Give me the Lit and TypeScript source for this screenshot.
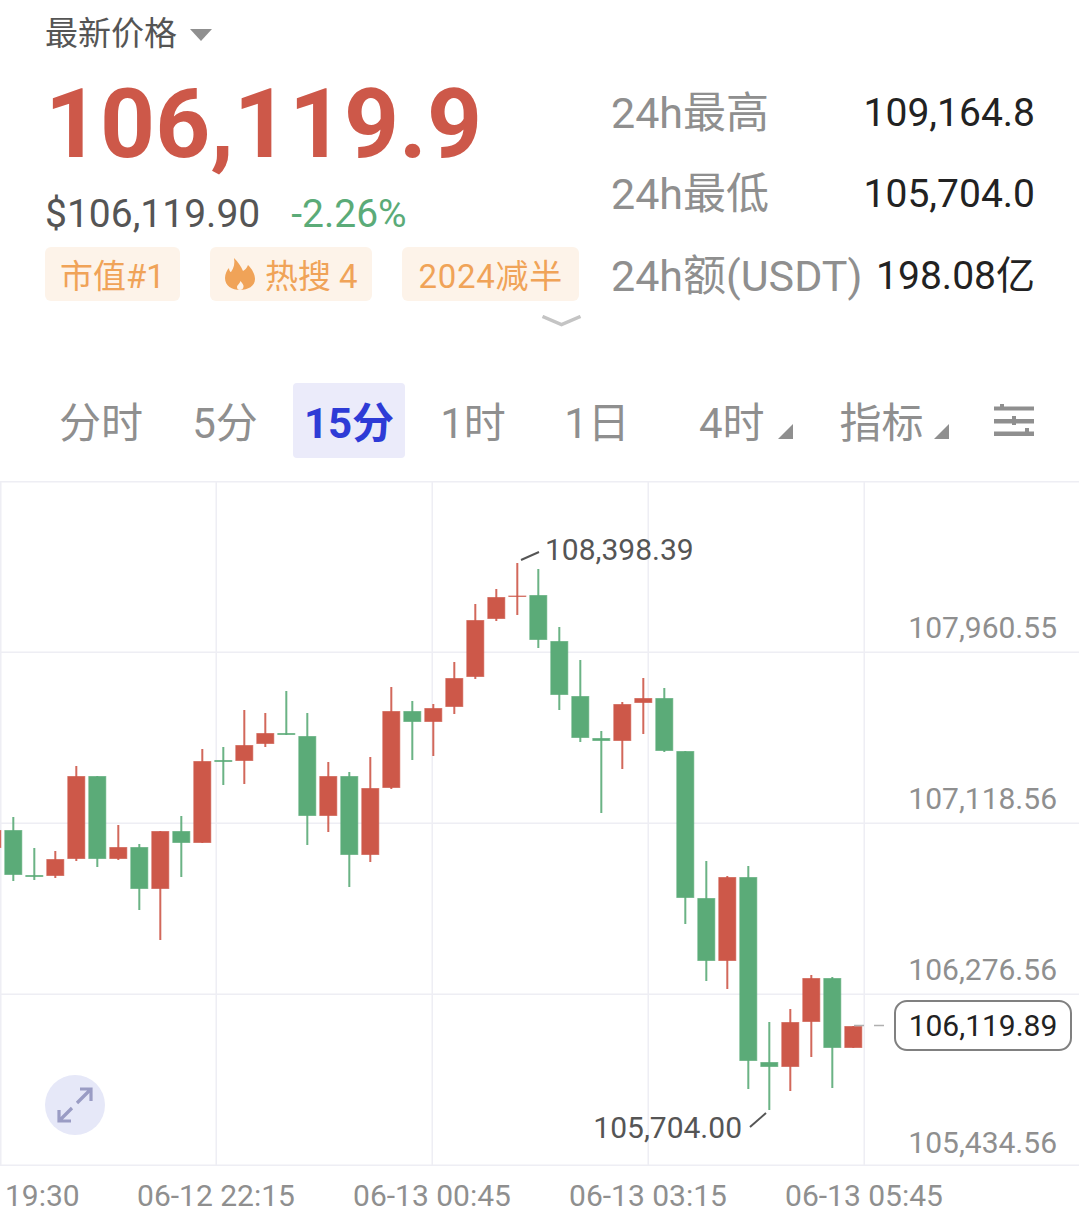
import { LitElement, html, css, svg, unsafeCSS } from 'lit';
import { customElement } from 'lit/decorators.js';

const RED = '#cd5849';
const GREEN = '#5bab78';

// [r|g, body top, body bottom, wick top, wick bottom], 21px apart
const candles: [string, number, number, number, number][] = [
  ['r', 830, 848, 830, 848],
  ['g', 830, 875, 817, 881],
  ['g', 875, 877, 848, 880],
  ['r', 859, 876, 851, 878],
  ['r', 776, 859, 766, 861],
  ['g', 776, 859, 776, 867],
  ['r', 847, 859, 825, 860],
  ['g', 847, 889, 844, 910],
  ['r', 831, 889, 831, 940],
  ['g', 831, 843, 816, 877],
  ['r', 761, 843, 749, 843],
  ['g', 760, 762, 747, 785],
  ['r', 745, 761, 710, 784],
  ['r', 733, 744, 713, 747],
  ['g', 733, 735, 691, 735],
  ['g', 736, 816, 713, 845],
  ['r', 776, 816, 762, 832],
  ['g', 776, 855, 772, 887],
  ['r', 788, 855, 757, 862],
  ['r', 711, 788, 687, 789],
  ['g', 711, 722, 701, 760],
  ['r', 708, 722, 704, 756],
  ['r', 678, 707, 662, 714],
  ['r', 620, 677, 604, 679],
  ['r', 597, 619, 589, 621],
  ['r', 595.5, 597, 563, 615],
  ['g', 595, 640, 569, 648],
  ['g', 641, 695, 627, 710],
  ['g', 696, 738, 660, 742],
  ['g', 738, 741, 731, 813],
  ['r', 704, 741, 702, 769],
  ['r', 698, 703, 678, 734],
  ['g', 698, 751, 688, 752],
  ['g', 751, 898, 751, 924],
  ['g', 898, 961, 861, 981],
  ['r', 877, 961, 876, 989],
  ['g', 877, 1061, 866, 1089],
  ['g', 1062, 1067, 1022, 1110],
  ['r', 1022, 1067, 1009, 1091],
  ['r', 978, 1022, 975, 1057],
  ['g', 978, 1048, 977, 1088],
  ['r', 1026, 1048, 1026, 1048],
];

const axis = [
  ['107,960.55', 638],
  ['107,118.56', 809],
  ['106,276.56', 980],
  ['105,434.56', 1153],
] as const;

const times = [
  ['06-12 22:15', 216],
  ['06-13 00:45', 432],
  ['06-13 03:15', 648],
  ['06-13 05:45', 864],
] as const;

@customElement('app-root')
export class AppRoot extends LitElement {
  static styles = css`
    :host {
      display: block;
      width: 1079px;
      height: 1218px;
      overflow: hidden;
      background: #fff;
      font-family: Roboto, 'Noto Sans CJK SC', sans-serif;
    }

    .head {
      display: flex;
      height: 383px;
      padding: 0 44px 0 45px;
      box-sizing: border-box;
    }

    .left {
      width: 566px;
      flex: none;
    }

    .title {
      display: flex;
      align-items: center;
      gap: 13px;
      margin-top: 11px;
      font-size: 33px;
      line-height: 46px;
      color: #555;
    }

    .title svg {
      width: 22px;
      height: 12px;
      margin-top: 2px;
    }

    .price {
      margin-top: 17px;
      font-size: 96px;
      line-height: 100px;
      font-weight: 700;
      color: ${unsafeCSS(RED)};
    }

    .sub {
      display: flex;
      gap: 31px;
      margin-top: 17px;
      font-size: 39px;
      line-height: 46px;
      color: #555;
    }

    .change {
      color: ${unsafeCSS(GREEN)};
    }

    .tags {
      display: flex;
      gap: 30px;
      margin-top: 10px;
    }

    .tag {
      display: flex;
      align-items: center;
      gap: 10px;
      height: 54px;
      padding: 0 15px;
      border-radius: 6px;
      background: #fdf3e9;
      color: #f0a358;
      font-size: 33px;
      white-space: nowrap;
    }

    .tag.hot {
      padding: 0 14px 0 15px;
    }

    .tag.halving {
      padding: 0 16px 0 17px;
      letter-spacing: 0.7px;
    }

    .tag svg {
      width: 30px;
      height: 32px;
    }

    .more {
      display: block;
      width: 41px;
      height: 12px;
      margin: 14px 0 0 496px;
    }

    .stats {
      flex: 1;
      padding-top: 72px;
    }

    .row {
      display: flex;
      justify-content: space-between;
      align-items: center;
      height: 81.5px;
      white-space: nowrap;
    }

    .label {
      font-size: 43px;
      line-height: 46px;
      color: #8f8f8f;
    }

    .value {
      font-size: 39px;
      line-height: 46px;
      color: #222;
    }

    .tabs {
      display: flex;
      align-items: stretch;
      height: 75px;
      padding: 0 45px 0 39px;
      font-size: 42px;
      color: #8f8f8f;
    }

    .tab {
      display: flex;
      align-items: center;
      justify-content: center;
      width: 124px;
      box-sizing: border-box;
    }

    .tab span,
    .drop span {
      display: block;
      line-height: 50px;
      margin-top: 7px;
    }

    .tab.on {
      width: 112px;
      margin: 0 6px;
      border-radius: 4px;
      background: #ebebfa;
      color: #2e3bd6;
      font-weight: 700;
    }

    .drop {
      display: flex;
      align-items: center;
    }

    .drop svg {
      width: 15px;
      height: 15px;
      margin-top: 22px;
    }

    .drop.hour {
      gap: 13px;
      margin-left: 40px;
    }

    .drop.ind {
      gap: 10px;
      margin-left: 47px;
    }

    .knobs {
      width: 40px;
      height: 32px;
      margin: 21px 0 0 auto;
    }

    .chart {
      display: block;
      width: 1079px;
      height: 737px;
      margin-top: 23px;
    }

    .chart text {
      font-family: Roboto, sans-serif;
      font-size: 30px;
      fill: #8f8f8f;
    }

    .chart text.mark {
      fill: #555;
    }

    .chart text.now {
      fill: #222;
    }
  `;

  renderCandle(c: (typeof candles)[number], i: number) {
    const [kind, top, bottom, high, low] = c;
    const x = -7.7 + i * 21;
    const fill = kind === 'r' ? RED : GREEN;
    return svg`
      <rect x=${x - 1} y=${high} width="2" height=${low - high} fill=${fill} opacity="0.9"></rect>
      <rect
        x=${x - 8.5}
        y=${top + 0.5}
        width="17"
        height=${Math.max(bottom - top - 1, 0.5)}
        fill=${fill}
        stroke=${fill}
        stroke-opacity="0.65"
      ></rect>
    `;
  }

  renderChart() {
    return html`
      <svg class="chart" viewBox="0 481 1079 737">
        <g fill="#eeeef4">
          <rect x="0" y="481" width="1079" height="1.5"></rect>
          <rect x="0" y="651.5" width="1079" height="1.5"></rect>
          <rect x="0" y="822.5" width="1079" height="1.5"></rect>
          <rect x="0" y="993.5" width="1079" height="1.5"></rect>
          <rect x="0" y="1164.5" width="1079" height="1.5"></rect>
          <rect x="0" y="481" width="1.5" height="684"></rect>
          <rect x="215.5" y="481" width="1.5" height="684"></rect>
          <rect x="431.5" y="481" width="1.5" height="684"></rect>
          <rect x="647.5" y="481" width="1.5" height="684"></rect>
          <rect x="863.5" y="481" width="1.5" height="684"></rect>
        </g>

        ${candles.map((c, i) => this.renderCandle(c, i))}

        <path d="M521 560 L539 552" stroke="#555" stroke-width="2" fill="none"></path>
        <text class="mark" x="545" y="560">108,398.39</text>
        <path d="M750 1127 L766 1113" stroke="#555" stroke-width="2" fill="none"></path>
        <text class="mark" x="742" y="1138" text-anchor="end">105,704.00</text>

        ${axis.map(([t, y]) => svg`<text x="1057" y=${y} text-anchor="end">${t}</text>`)}

        <path d="M854 1025.5 H864 M874 1025.5 H884" stroke="#b0b0b0" stroke-width="1.5"></path>
        <rect x="895" y="1001" width="176" height="49" rx="12" fill="#fff" stroke="#808080" stroke-width="2"></rect>
        <text class="now" x="983" y="1036" text-anchor="middle">106,119.89</text>

        <circle cx="75" cy="1105" r="30" fill="#e6e8f8"></circle>
        <path
          d="M72 1108 L59 1121 M59 1110 V1121 H71 M77 1103 L91 1089 M80 1089 H91 V1101"
          stroke="#9a9cc4"
          stroke-width="3.2"
          fill="none"
        ></path>

        <text x="5" y="1206">19:30</text>
        ${times.map(([t, x]) => svg`<text x=${x} y="1206" text-anchor="middle">${t}</text>`)}
      </svg>
    `;
  }

  render() {
    return html`
      <div class="head">
        <div class="left">
          <div class="title">
            最新价格
            <svg viewBox="0 0 22 12"><path d="M0 0 H22 L11 12 Z" fill="#8f8f8f"></path></svg>
          </div>
          <div class="price">106,119.9</div>
          <div class="sub">
            <span>$106,119.90</span>
            <span class="change">-2.26%</span>
          </div>
          <div class="tags">
            <div class="tag">市值#1</div>
            <div class="tag hot">
              <svg viewBox="0 0 30 32">
                <path
                  d="M9 0 C13 4 16 8 18 13 C20 12 22 10 23 7 C27 11 30 16 30 21 C30 28 23 32 15 32 C7 32 0 28 0 20 C0 16 2 12 4 10 C4 12 5 14 6 14 C9 10 10 5 9 0 Z"
                  fill="#f0a358"
                ></path>
                <path d="M15.5 23 C17 25 19 27 18.5 29 C18 31 17 32 15 32 C13 32 12 31 12 29 C12 27 14.5 26 15.5 23 Z" fill="#fdf3e9"></path>
              </svg>
              热搜 4
            </div>
            <div class="tag halving">2024减半</div>
          </div>
          <svg class="more" viewBox="0 0 41 12">
            <path d="M1.5 1.5 L20.5 9.5 L39.5 1.5" stroke="#c4c4c4" stroke-width="3.5" fill="none"></path>
          </svg>
        </div>
        <div class="stats">
          <div class="row"><span class="label">24h最高</span><span class="value">109,164.8</span></div>
          <div class="row"><span class="label">24h最低</span><span class="value">105,704.0</span></div>
          <div class="row"><span class="label">24h额(USDT)</span><span class="value">198.08亿</span></div>
        </div>
      </div>

      <div class="tabs">
        <div class="tab"><span>分时</span></div>
        <div class="tab"><span>5分</span></div>
        <div class="tab on"><span>15分</span></div>
        <div class="tab"><span>1时</span></div>
        <div class="tab"><span>1日</span></div>
        <div class="drop hour">
          <span>4时</span>
          <svg viewBox="0 0 15 15"><path d="M15 0 V15 H0 Z" fill="#8f8f8f"></path></svg>
        </div>
        <div class="drop ind">
          <span>指标</span>
          <svg viewBox="0 0 15 15"><path d="M15 0 V15 H0 Z" fill="#8f8f8f"></path></svg>
        </div>
        <svg class="knobs" viewBox="0 0 40 32">
          <g fill="#8f8f8f">
            <rect x="0" y="2.5" width="40" height="4"></rect>
            <rect x="0" y="15" width="40" height="4.5"></rect>
            <rect x="0" y="27.5" width="40" height="4.5"></rect>
            <rect x="6" y="0" width="4" height="6"></rect>
            <rect x="18" y="12" width="4" height="9"></rect>
            <rect x="31" y="24" width="4" height="8"></rect>
          </g>
        </svg>
      </div>

      ${this.renderChart()}
    `;
  }
}
